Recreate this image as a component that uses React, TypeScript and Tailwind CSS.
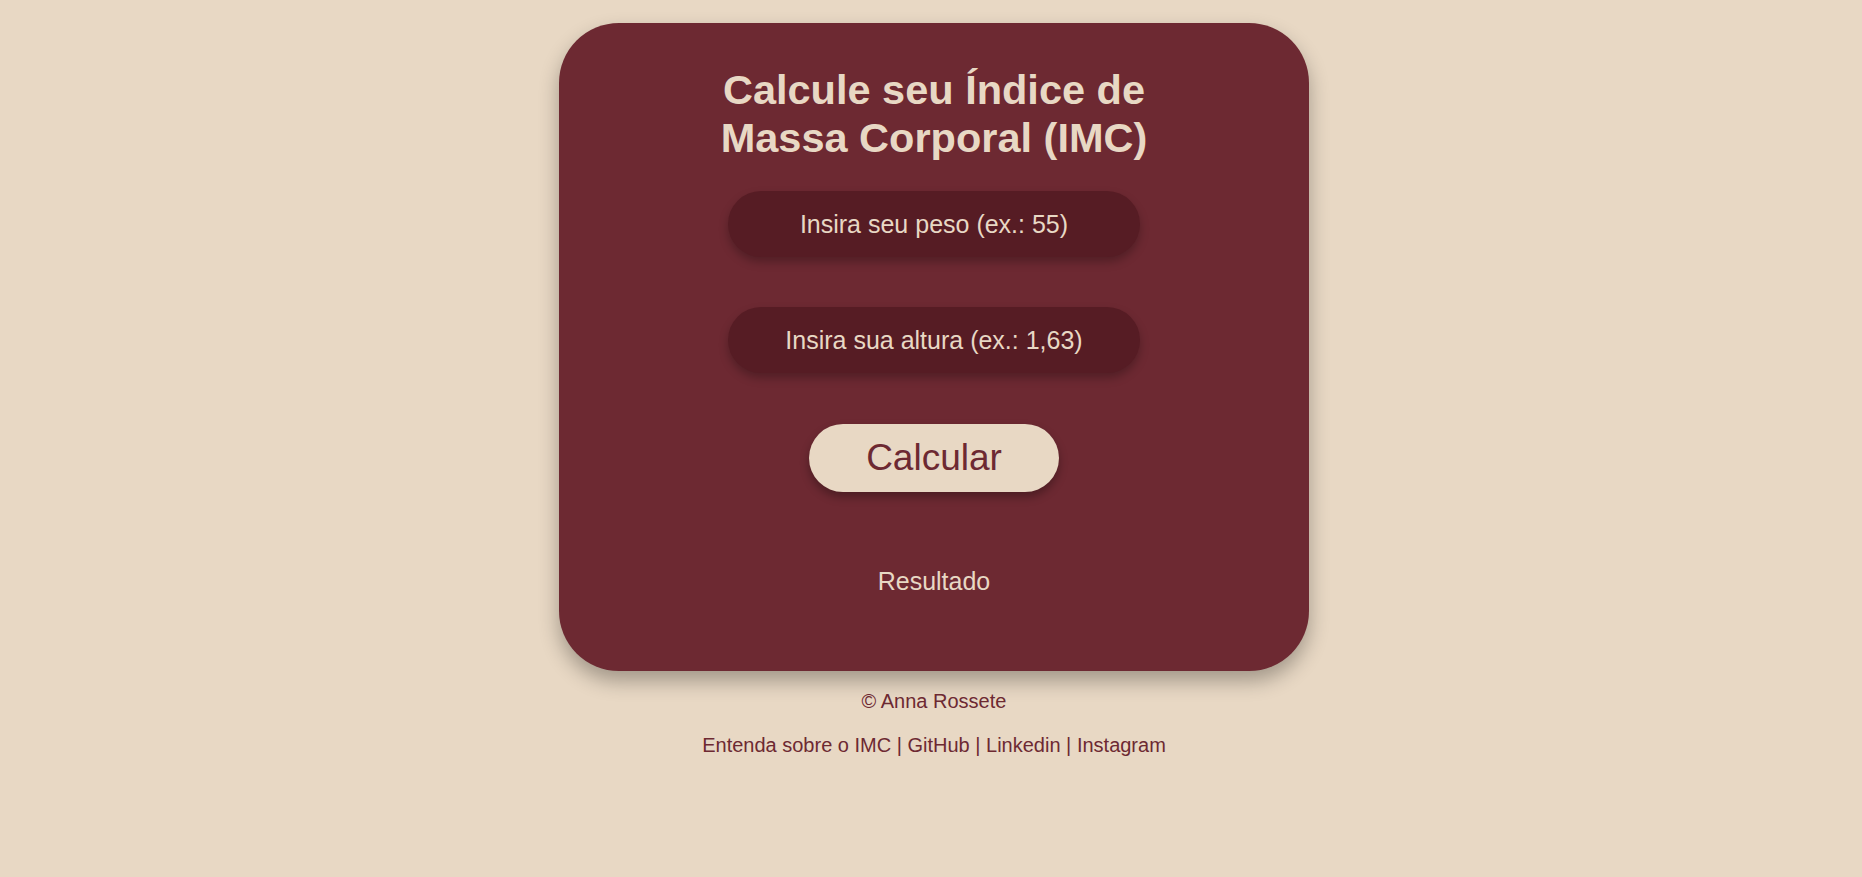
import { useState } from 'react'

function App(): JSX.Element {
  const [peso, setPeso] = useState('')
  const [altura, setAltura] = useState('')
  const [resultado, setResultado] = useState('Resultado')

  function handleCalcular(): void {
    const p = parseFloat(peso.replace(',', '.'))
    const a = parseFloat(altura.replace(',', '.'))
    if (!p || !a) {
      setResultado('Resultado')
      return
    }
    setResultado(`Seu IMC é ${(p / (a * a)).toFixed(2)}`)
  }

  return (
    <div className="min-h-screen bg-[#e8d8c4] pl-[6px] pt-[23px] font-['Liberation_Sans',Arial,sans-serif]">
      <main className="mx-auto flex w-[750px] flex-col items-center rounded-[60px] bg-[#6d2932] pt-[43px] pb-[75px] shadow-[0_10px_20px_rgba(0,0,0,0.3)]">
        <h1 className="w-[480px] text-center text-[41.5px] font-bold leading-[48px] text-[#e8d8c4]">
          Calcule seu Índice de Massa Corporal (IMC)
        </h1>

        <input
          type="text"
          value={peso}
          onChange={(e) => {
            setPeso(e.target.value)
          }}
          placeholder="Insira seu peso (ex.: 55)"
          className="mt-[29px] h-[66px] w-[412px] rounded-full bg-[#561c24] text-center text-[25px] text-[#e8d8c4] shadow-[0_5px_10px_rgba(0,0,0,0.25)] outline-none placeholder:text-[#e8d8c4]"
        />

        <input
          type="text"
          value={altura}
          onChange={(e) => {
            setAltura(e.target.value)
          }}
          placeholder="Insira sua altura (ex.: 1,63)"
          className="mt-[50px] h-[66px] w-[412px] rounded-full bg-[#561c24] text-center text-[25px] text-[#e8d8c4] shadow-[0_5px_10px_rgba(0,0,0,0.25)] outline-none placeholder:text-[#e8d8c4]"
        />

        <button
          type="button"
          onClick={handleCalcular}
          className="mt-[51px] h-[68px] w-[250px] cursor-pointer rounded-full bg-[#e8d8c4] text-[37px] text-[#6d2932] shadow-[0_5px_10px_rgba(0,0,0,0.3)]"
        >
          Calcular
        </button>

        <p className="mt-[75px] text-[25px] leading-[29px] text-[#e8d8c4]">{resultado}</p>
      </main>

      <footer className="flex flex-col items-center pt-[19px] text-[20px] leading-[23px] text-[#6d2932]">
        <p>© Anna Rossete</p>
        <p className="mt-[21px]">
          <a href="#">Entenda sobre o IMC</a> | <a href="#">GitHub</a> | <a href="#">Linkedin</a> |{' '}
          <a href="#">Instagram</a>
        </p>
      </footer>
    </div>
  )
}

export default App
